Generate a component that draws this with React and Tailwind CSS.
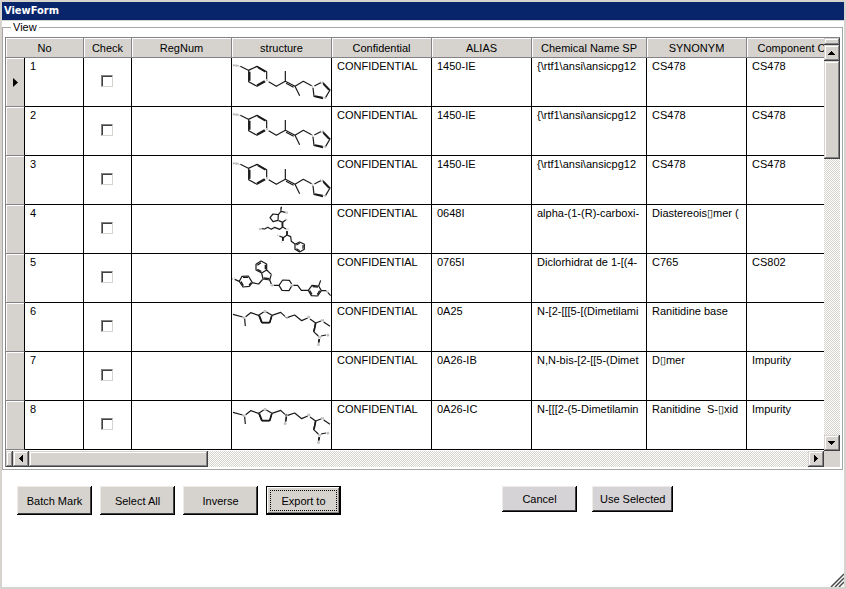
import React from "react";

const RAISED =
  "bg-[#d6d3ce] shadow-[inset_-1px_-1px_0_#424142,inset_1px_1px_0_#d6d3ce,inset_-2px_-2px_0_#848284,inset_2px_2px_0_#fff]";
const TRACK =
  "bg-[repeating-conic-gradient(#d6d3ce_0_25%,#ffffff_0_50%)] bg-[length:2px_2px]";

function Drawing({ box, children }) {
  return (
    <svg
      viewBox={box}
      className="block h-12 w-[99px]"
      fill="none"
      stroke="#1a1a1a"
      strokeWidth="3.6"
      strokeLinejoin="round"
      aria-hidden="true"
    >
      {children}
    </svg>
  );
}

function Triazole() {
  return (
    <Drawing box="21 9 297 144">
      <path stroke="#999" strokeWidth="2" d="M25 28v6M25 31h5M30 28v6M33 30h4v4h-4zM39 30l3 4v3" />
      <path d="M46 34L70 46L96 34L125 50V73M121 80L96 94L71 80V46M131 80L154 94L181 79V48M181 79L210 94L235 79L260 92M210 94L224 122" />
      <path strokeWidth="5" d="M98 37L121 50M74 50V77M96 91L119 78" />
      <path d="M183 85L206 97" />
      <path stroke="#999" strokeWidth="2" d="M123 73l6 6M129 73l-6 6M262 91v7h4M287 79v6h6v-6M294 128h7v4" />
      <path d="M268 93L287 83M264 99L267 124L294 131M302 127L315 105L294 83" />
      <path strokeWidth="5" d="M269 123L293 128M312 105L295 87" />
    </Drawing>
  );
}

function Proline() {
  return (
    <Drawing box="6 0 297 144">
      <path d="M145 29L153 19L166 22M153 19V8M145 29L129 27L120 38L129 50L144 46ZM146 47L158 52L167 45M158 52V66L149 73L134 67L124 73L113 67L104 72L95 71M158 66L168 72M171 78V90L160 98L148 93M158 98V108M171 90L182 95L184 109L195 117" />
      <path strokeWidth="5" d="M152 8h4M157 53V65M171 79V89M159 96V107" />
      <path stroke="#999" strokeWidth="2" d="M167 19v6h5v-6M168 40v5h4M88 69v5h4v-5M169 71v5M174 70v6M143 89v5M155 110v4" />
      <path d="M195 118L209 111L223 118V133L209 141L195 133Z" />
      <path d="M199 120L209 115M219 120V131M209 137L199 131" />
    </Drawing>
  );
}

function Benzimidazole() {
  return (
    <Drawing box="6 147 297 144">
      <path d="M78 178L93 168L110 177V195L95 204L78 195ZM110 195L124 208L119 225L99 222L95 204M99 222L86 237L67 233L55 213L36 214L28 229L39 246L58 244L67 233M28 229L14 223M119 225L124 237M131 241L147 241L158 225L178 226L185 237M185 243L177 257L156 256L147 241M190 241L203 241L214 256L235 256L246 241L266 243L274 257L263 273L244 272L235 256M266 243L272 226M274 257L289 257M294 263L302 272" />
      <path strokeWidth="4" d="M82 181L93 173M106 179V193M94 200L82 193M101 219L118 221M39 217L54 217M33 230L40 242M57 241L63 233M239 257L246 268M248 245L264 246M269 257L262 269" />
      <path stroke="#999" strokeWidth="2" d="M7 219v6M11 219h3M121 207v5h4v-5M97 221v6M123 237v6h5v-6M183 238v6h5v-6M290 257v5h4v-5" />
    </Drawing>
  );
}

function FuranTail() {
  return (
    <>
      <path d="M9 43L38 51M44 57L46 78M47 50L62 38L86 46L101 36M109 36L126 46L119 68H95L86 46M126 46L152 37L165 49" />
      <path strokeWidth="5" d="M88 47L96 68M96 68H119M119 68L125 48" />
      <path stroke="#999" strokeWidth="2" d="M40 50v7M45 50v7M40 50l5 7M102 32h6v5h-6zM234 47v8M239 47v8M234 51h5M275 57v8M280 57v8M275 61h5M266 108v7M271 108v7M266 108l5 7M291 103h5v5h-5zM263 131h5v5h-5z" />
      <path d="M173 52L194 45L215 62L233 54M240 57L257 69L273 63M281 66L300 79M257 69L251 95L265 108M273 108L288 105M268 117L266 128" />
      <path strokeWidth="5" d="M257 69L252 94M268 117L266 127" />
    </>
  );
}

function Ranitidine() {
  return (
    <Drawing box="6 9 297 144">
      <FuranTail />
      <path stroke="#555" strokeWidth="3" d="M166 50l3 4h4" />
    </Drawing>
  );
}

function RanitidineOxide() {
  return (
    <Drawing box="6 9 297 144">
      <FuranTail />
      <path stroke="#666" strokeWidth="3" d="M167 49h4v5h-4z" />
      <path strokeWidth="5" d="M169 56L167 71" />
      <path stroke="#999" strokeWidth="2" d="M163 74h5v5h-5z" />
    </Drawing>
  );
}

const COLUMNS = [
  "Check",
  "RegNum",
  "structure",
  "Confidential",
  "ALIAS",
  "Chemical Name SP",
  "SYNONYM",
  "Component C",
];

const ROWS = [
  { art: Triazole, alias: "1450-IE", name: "{\\rtf1\\ansi\\ansicpg12", synonym: "CS478", component: "CS478" },
  { art: Triazole, alias: "1450-IE", name: "{\\rtf1\\ansi\\ansicpg12", synonym: "CS478", component: "CS478" },
  { art: Triazole, alias: "1450-IE", name: "{\\rtf1\\ansi\\ansicpg12", synonym: "CS478", component: "CS478" },
  { art: Proline, alias: "0648I", name: "alpha-(1-(R)-carboxi-", synonym: "Diastereois▯mer (", component: "" },
  { art: Benzimidazole, alias: "0765I", name: "Diclorhidrat de 1-[(4-", synonym: "C765", component: "CS802" },
  { art: Ranitidine, alias: "0A25", name: "N-[2-[[[5-[(Dimetilami", synonym: "Ranitidine base", component: "" },
  { art: null, alias: "0A26-IB", name: "N,N-bis-[2-[[5-(Dimet", synonym: "D▯mer", component: "Impurity" },
  { art: RanitidineOxide, alias: "0A26-IC", name: "N-[[[2-(5-Dimetilamin", synonym: "Ranitidine  S-▯xid", component: "Impurity" },
];

function Th({ children, span }) {
  return (
    <th
      colSpan={span}
      className="h-5 border-r border-b border-[#848284] bg-[#d6d3ce] p-0 text-center font-normal whitespace-nowrap shadow-[inset_1px_1px_0_#fff]"
    >
      {children}
    </th>
  );
}

function Td({ children }) {
  return (
    <td className="h-[49px] overflow-hidden border-r border-b border-black px-[5px] py-0 align-top leading-4 whitespace-pre">
      {children}
    </td>
  );
}

function Grid() {
  return (
    <table className="w-[831px] table-fixed border-separate border-spacing-0">
      <colgroup>
        <col className="w-[19px]" />
        <col className="w-[59px]" />
        <col className="w-[48px]" />
        <col className="w-[100px]" />
        <col className="w-[100px]" />
        <col className="w-[100px]" />
        <col className="w-[100px]" />
        <col className="w-[115px]" />
        <col className="w-[100px]" />
        <col className="w-[90px]" />
      </colgroup>
      <thead>
        <tr>
          <Th span={2}>No</Th>
          {COLUMNS.map((c) => (
            <Th key={c}>{c}</Th>
          ))}
        </tr>
      </thead>
      <tbody>
        {ROWS.map((row, i) => {
          const Art = row.art;
          return (
            <tr key={i}>
              <td className="h-[49px] border-r border-b border-r-black border-b-[#848284] bg-[#d6d3ce] p-0 shadow-[inset_1px_1px_0_#fff]">
                {i === 0 && (
                  <svg width="5" height="9" viewBox="0 0 5 9" className="mx-auto block" aria-hidden="true">
                    <path d="M0 0L5 4.5L0 9Z" />
                  </svg>
                )}
              </td>
              <Td>{i + 1}</Td>
              <td className="border-r border-b border-black pt-0 pr-0.5 pb-0.5 pl-0 align-middle">
                <input
                  type="checkbox"
                  aria-label={"Check " + (i + 1)}
                  className="mx-auto block size-3 appearance-none border border-t-[#848284] border-r-[#d6d3ce] border-b-[#d6d3ce] border-l-[#848284] bg-white shadow-[inset_1px_1px_0_#424142] checked:bg-black"
                />
              </td>
              <Td />
              <td className="border-r border-b border-black p-0">{Art && <Art />}</td>
              <Td>CONFIDENTIAL</Td>
              <Td>{row.alias}</Td>
              <Td>{row.name}</Td>
              <Td>{row.synonym}</Td>
              <Td>{row.component}</Td>
            </tr>
          );
        })}
      </tbody>
    </table>
  );
}

function ScrollButton({ label, d }) {
  return (
    <button type="button" aria-label={label} className={"size-4 shrink-0 " + RAISED}>
      <svg viewBox="0 0 16 16" className="block size-4" shapeRendering="crispEdges" aria-hidden="true">
        <path d={d} />
      </svg>
    </button>
  );
}

function PushButton({ children, className = "" }) {
  return (
    <button
      type="button"
      className={
        "min-w-[75px] px-2 shadow-[inset_-1px_-1px_0_#000,inset_1px_1px_0_#efebe7,inset_-2px_-2px_0_#424142] " +
        className
      }
    >
      {children}
    </button>
  );
}

export default function App() {
  return (
    <div className="flex min-h-screen flex-col border-2 border-[#d6d3ce] bg-white font-['Liberation_Sans',Arial,sans-serif] text-[11px] leading-4 text-black">
      <header className="h-[19px] border-b border-[#d6d3ce] bg-[#08246b] px-[2px]">
        <h1 className="font-['DejaVu_Sans_Condensed','DejaVu_Sans',sans-serif] text-[11px] leading-[18px] font-bold text-white">
          ViewForm
        </h1>
      </header>

      <fieldset className="mr-px min-w-0 border border-[#a5a6a5] px-[2px] pt-1 pb-[2px]">
        <legend className="ml-[6px] px-[2px] leading-3">View</legend>
        <div className="border-t border-l border-[#848284]">
          <div className="flex">
            <div className="min-w-0 flex-1 overflow-hidden pb-px">
              <Grid />
            </div>
            <div className="flex w-4 shrink-0 flex-col">
              <div className={"h-[7px] shrink-0 " + RAISED} />
              <ScrollButton label="Scroll up" d="M7 6h1v1h1v1h1v1h1v1H4V9h1V8h1V7h1z" />
              <div className={"flex-1 " + TRACK}>
                <div className={"h-[98px] " + RAISED} />
              </div>
              <ScrollButton label="Scroll down" d="M4 6h7v1h-1v1H9v1H8v1H7V9H6V8H5V7H4z" />
            </div>
          </div>
          <div className="flex h-4">
            <div className={"w-[7px] shrink-0 " + RAISED} />
            <ScrollButton label="Scroll left" d="M9 4h1v7H9v-1H8V9H7V8H6V7h1V6h1V5h1z" />
            <div className={"flex-1 " + TRACK}>
              <div className={"h-4 w-[179px] " + RAISED} />
            </div>
            <ScrollButton label="Scroll right" d="M6 4h1v1h1v1h1v1h1v1H9v1H8v1H7v1H6z" />
            <div className="w-4 shrink-0 bg-[#d6d3ce]" />
          </div>
        </div>
      </fieldset>

      <div className="flex items-start pt-4 pl-[15px]">
        <div className="flex gap-2">
          <PushButton className="h-[29px] bg-[#d6d3ce]">Batch Mark</PushButton>
          <PushButton className="h-[29px] bg-[#d6d3ce]">Select All</PushButton>
          <PushButton className="h-[29px] bg-[#d6d3ce]">Inverse</PushButton>
          <button
            type="button"
            className="h-[29px] w-[75px] border border-black bg-[#d6d3ce] p-[3px] shadow-[inset_-1px_-1px_0_#000,inset_1px_1px_0_#fff,inset_-2px_-2px_0_#848284]"
          >
            <span className="flex h-full items-center justify-center border border-dotted border-black">
              Export to
            </span>
          </button>
        </div>
        <div className="ml-[161px] flex gap-[15px]">
          <PushButton className="h-[26px] bg-[#d6d3d6]">Cancel</PushButton>
          <PushButton className="h-[26px] bg-[#d6d3d6]">Use Selected</PushButton>
        </div>
      </div>

      <svg
        viewBox="0 0 14 14"
        className="mt-auto block size-[14px] self-end"
        stroke="#4a4a4a"
        strokeWidth="1.5"
        aria-hidden="true"
      >
        <path d="M1 14L14 1M5 14L14 5M9 14L14 9" />
      </svg>
    </div>
  );
}
